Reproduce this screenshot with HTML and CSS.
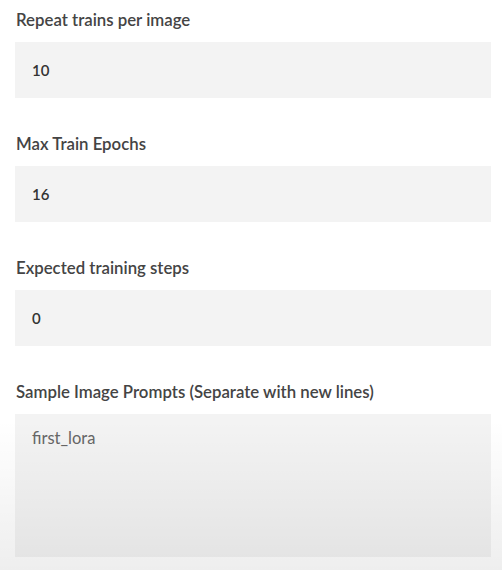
FILE: index.html
```html
<!DOCTYPE html>
<html>
<head>
<meta charset="utf-8">
<link rel="stylesheet" href="styles.css">
</head>
<body>
<main class="form">
  <section class="field">
    <label class="label">Repeat trains per image</label>
    <div class="input"><span class="value">10</span></div>
  </section>
  <section class="field">
    <label class="label">Max Train Epochs</label>
    <div class="input"><span class="value">16</span></div>
  </section>
  <section class="field">
    <label class="label">Expected training steps</label>
    <div class="input"><span class="value">0</span></div>
  </section>
  <section class="field">
    <label class="label">Sample Image Prompts (Separate with new lines)</label>
    <div class="textarea"><span class="text">first_lora</span></div>
  </section>
</main>
<div class="shade"></div>
</body>
</html>
```
FILE: styles.css
```css
html, body {
  margin: 0;
  padding: 0;
  background: #ffffff;
}
body {
  font-family: Lato, "Open Sans", sans-serif;
  width: 502px;
  height: 570px;
  overflow: hidden;
  position: relative;
}
.form {
  display: flex;
  flex-direction: column;
  gap: 35px;
  padding: 9px 11px 0 15px;
}
.field {
  display: flex;
  flex-direction: column;
  gap: 11px;
}
.label {
  font-size: 16.8px;
  font-weight: 600;
  color: #444;
  line-height: 22px;
  padding-left: 1px;
}
.input {
  height: 56px;
  background: #f3f3f3;
  display: flex;
  align-items: center;
  padding-left: 17px;
}
.value {
  font-size: 15px;
  font-weight: 600;
  color: #333;
}
.textarea {
  height: 143px;
  background: #f3f3f3;
  padding: 14px 17px;
  box-sizing: border-box;
}
.text {
  font-size: 16.5px;
  color: #666;
}
.shade {
  position: absolute;
  left: 0;
  right: 0;
  bottom: 0;
  height: 150px;
  background: linear-gradient(to bottom, rgba(0,0,0,0), rgba(0,0,0,0.065));
  pointer-events: none;
}
```
